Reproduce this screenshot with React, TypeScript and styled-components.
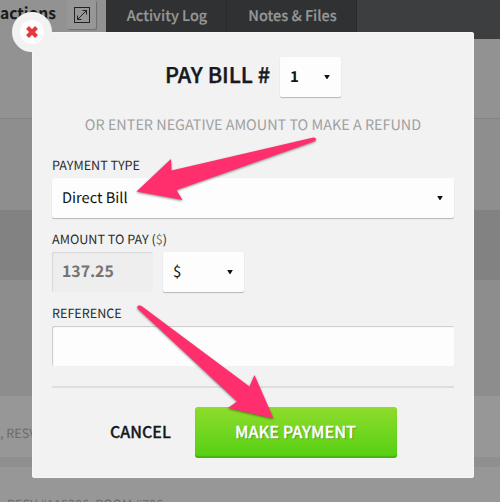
import styled, { createGlobalStyle } from 'styled-components'

type textProps = {
    size: number
    color?: string
    weight?: number
}

export default function App() {
    return (
        <>
            <GlobalStyle />
            <Screen>
                <Page>
                    <TabBar>
                        <ActiveTab>
                            <Text size={15.6} weight={700} color="#1a1b1c">actions</Text>
                            <ExpandButton>
                                <ExpandIcon />
                            </ExpandButton>
                        </ActiveTab>
                        <Tab width={121}>Activity Log</Tab>
                        <Tab width={130}>Notes &amp; Files</Tab>
                    </TabBar>
                    <Band height={79} color="#929292" />
                    <Band height={92} color="#8e8e8e" line />
                    <Band height={70} color="#828282" />
                    <Band height={116} color="#8d8d8d" />
                    <Band height={61} color="#979797">
                        <PageText left={0}>, RESV #115285</PageText>
                    </Band>
                    <Band height={10} color="#8f8f8f" />
                    <Band height={61} color="#979797">
                        <PageText left={7}>RESV #115286, ROOM #706</PageText>
                    </Band>
                </Page>
                <Modal>
                    <CloseButton>
                        <CloseIcon />
                    </CloseButton>
                    <Title>
                        <Heading>PAY BILL #</Heading>
                        <Select width={61}>
                            <Text size={15} weight={700}>1</Text>
                            <Caret />
                        </Select>
                    </Title>
                    <Hint>OR ENTER NEGATIVE AMOUNT TO MAKE A REFUND</Hint>
                    <Label>PAYMENT TYPE</Label>
                    <Select width={402}>
                        <Text size={14.6}>Direct Bill</Text>
                        <Caret />
                    </Select>
                    <Label>AMOUNT TO PAY (<span>$</span>)</Label>
                    <Row>
                        <Amount>137.25</Amount>
                        <Select width={81}>
                            <Text size={15}>$</Text>
                            <Caret />
                        </Select>
                    </Row>
                    <Label>REFERENCE</Label>
                    <Field />
                    <Footer>
                        <Cancel>CANCEL</Cancel>
                        <Submit>MAKE PAYMENT</Submit>
                    </Footer>
                </Modal>
                <Arrows />
            </Screen>
        </>
    )
}

const ExpandIcon = () => (
    <svg width="18" height="18" viewBox="0 0 18 18" fill="none" stroke="#222">
        <rect x="1.5" y="1.5" width="15" height="15" />
        <path d="M4.5 13.5L13.5 4.5M9.5 4.5H13.5V8.5M4.5 9.5V13.5H8.5" />
    </svg>
)

const CloseIcon = () => (
    <svg width="12" height="12" viewBox="0 0 12 12" stroke="#e8373b" strokeWidth="4">
        <path d="M1.5 1.5L10.5 10.5M10.5 1.5L1.5 10.5" />
    </svg>
)

const Caret = () => (
    <svg width="6" height="4" viewBox="0 0 6 4" fill="#111">
        <path d="M0.2 0H5.8L3.4 4H2.6Z" />
    </svg>
)

const Arrows = () => (
    <Overlay width="500" height="502" viewBox="0 0 500 502" fill="#ff2f6e">
        <path d="M136.5 191.5L171 159L171.5 170.5L313.5 137.4Q316 137.4 316 139.2Q316 140.6 314 141.4L176.5 190L182.5 200Z" />
        <path d="M273.5 418.5L228 408L237 401.5L138 309Q136.4 306.5 138.5 305.6Q140 305 141.5 306L249.5 386.5L254.5 375Z" />
    </Overlay>
)

const GlobalStyle = createGlobalStyle`
    * {
        box-sizing: border-box;
    }
    body {
        margin: 0;
        font-family: "Noto Sans CJK SC", "Noto Sans", sans-serif;
        text-rendering: geometricPrecision;
    }
`;

const Screen = styled.div`
    position: relative;
    width: 500px;
    height: 502px;
    overflow: hidden;
`;

const Page = styled.div`
    display: flex;
    flex-direction: column;
    height: 502px;
    overflow: hidden;
`;

const TabBar = styled.div`
    display: flex;
    flex-shrink: 0;
    height: 39px;
    background: #3d3e40;
`;

const ActiveTab = styled.div`
    display: flex;
    justify-content: space-between;
    width: 106px;
    padding: 0 10px 0 0;
    line-height: 26px;
    background: #929292;
`;

const ExpandButton = styled.div`
    display: flex;
    align-items: center;
    justify-content: center;
    width: 29px;
    height: 29px;
    border-radius: 2px;
    background: #979797;
    box-shadow: 1px 1px 1px rgba(0, 0, 0, 0.25);
`;

const Tab = styled.div<{ width: number }>`
    width: ${(p) => p.width}px;
    height: 39px;
    padding-left: 2px;
    border-right: 1px solid #2a2b2d;
    background: #303133;
    color: #979797;
    font-size: 14.5px;
    font-weight: 500;
    line-height: 31px;
    text-align: center;
    white-space: nowrap;
    -webkit-text-stroke: 0.2px;
`;

const Band = styled.div<{ height: number; color: string; line?: boolean }>`
    display: flex;
    align-items: center;
    flex-shrink: 0;
    height: ${(p) => p.height}px;
    background: ${(p) => p.color};
    border-top: ${(p) => (p.line ? '1px solid #838383' : 'none')};
`;

const PageText = styled.div<{ left: number }>`
    padding: 13px 0 0 ${(p) => p.left}px;
    color: #6c6c6c;
    font-size: 12.6px;
    line-height: 20px;
    white-space: nowrap;
`;

const Modal = styled.div`
    position: absolute;
    left: 32px;
    top: 32px;
    width: 442px;
    height: 446px;
    padding: 25px 20px 0;
    border-radius: 3px;
    background: #f2f2f2;
    box-shadow: inset 0 0 0 1px #f7f7f7;
`;

const CloseButton = styled.button`
    position: absolute;
    left: -20px;
    top: -20px;
    display: flex;
    align-items: center;
    justify-content: center;
    width: 40px;
    height: 40px;
    padding: 0;
    border: 8px solid #f2f2f2;
    border-radius: 50%;
    background: #fdfdfd;
`;

const Text = styled.span<textProps>`
    color: ${(p) => p.color || '#111'};
    font-size: ${(p) => p.size}px;
    font-weight: ${(p) => p.weight || 400};
    white-space: nowrap;
`;

const Title = styled.div`
    display: flex;
    justify-content: center;
    gap: 10px;
    height: 40px;
`;

const Heading = styled.h1`
    margin: 0;
    color: #16191d;
    font-size: 21.6px;
    font-weight: 500;
    line-height: 36px;
    white-space: nowrap;
    -webkit-text-stroke: 0.4px;
`;

const Select = styled.div<{ width: number }>`
    display: flex;
    align-items: center;
    justify-content: space-between;
    width: ${(p) => p.width}px;
    height: 40px;
    padding: 0 11px 0 10px;
    border-radius: 2px;
    background: #fdfdfd;
    box-shadow: 0 1px 1px rgba(0, 0, 0, 0.25);
    line-height: 38px;
`;

const Hint = styled.div`
    margin-top: 18px;
    height: 20px;
    color: #a0a0a0;
    font-size: 14.4px;
    line-height: 20px;
    text-align: center;
    white-space: nowrap;
`;

const Label = styled.div`
    height: 34px;
    padding-top: 13px;
    color: #2b2d30;
    font-size: 12.6px;
    line-height: 16px;
    white-space: nowrap;
    ${Hint} + & {
        height: 43px;
        padding-top: 22px;
    }
    span {
        color: #777;
    }
`;

const Row = styled.div`
    display: flex;
    gap: 10px;
`;

const Amount = styled.div`
    width: 101px;
    height: 40px;
    padding-left: 10px;
    border-radius: 2px;
    background: #eeeeee;
    box-shadow: inset 1px 1px 1px rgba(0, 0, 0, 0.1);
    color: #747474;
    font-size: 15.8px;
    font-weight: 700;
    line-height: 37px;
`;

const Field = styled.div`
    height: 40px;
    border-radius: 2px;
    background: #fdfdfd;
    box-shadow: inset 1px 1px 1px rgba(0, 0, 0, 0.2);
`;

const Footer = styled.div`
    display: flex;
    align-items: center;
    margin-top: 20px;
    padding: 19px 0 0 58px;
    border-top: 2px solid #dedede;
`;

const Cancel = styled.button`
    width: 85px;
    padding: 0 0 3px;
    border: none;
    background: none;
    color: #16191d;
    font-family: inherit;
    font-size: 16px;
    font-weight: 500;
    text-align: left;
    -webkit-text-stroke: 0.3px;
`;

const Submit = styled.button`
    width: 202px;
    height: 51px;
    padding: 0 1px 4px 0;
    border: none;
    border-radius: 3px;
    background: linear-gradient(#8edc2c, #55d013);
    box-shadow: inset 0 -2px 1px rgba(40, 130, 0, 0.35);
    color: #fff;
    font-family: inherit;
    font-size: 16.2px;
    font-weight: 500;
    text-shadow: 1px 1px 1px rgba(0, 0, 0, 0.3);
    -webkit-text-stroke: 0.3px;
`;

const Overlay = styled.svg`
    position: absolute;
    left: 0;
    top: 0;
    filter: drop-shadow(0 1px 1px rgba(0, 0, 0, 0.45));
`;
